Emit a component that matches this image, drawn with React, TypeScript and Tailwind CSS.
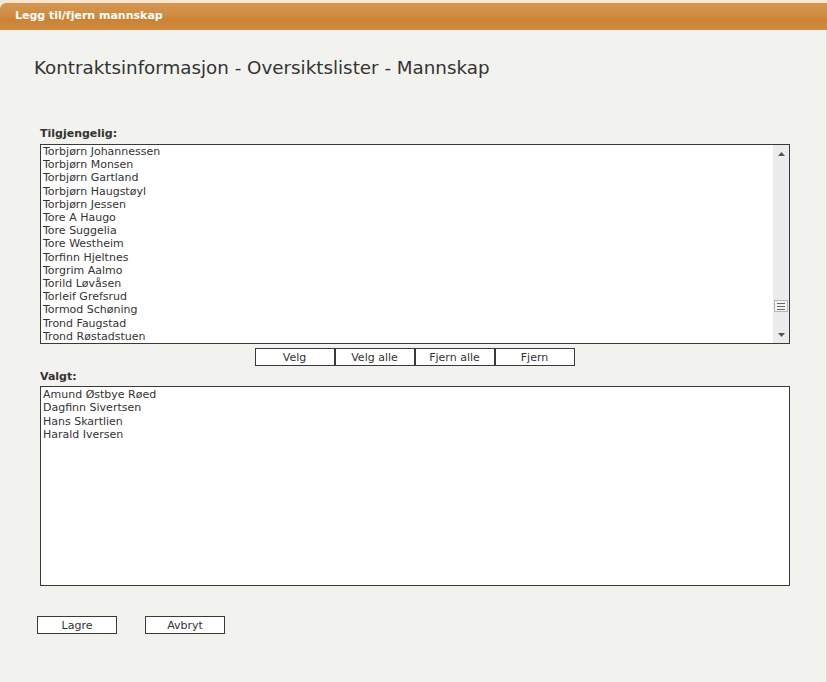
import React from "react";

const available = [
  "Torbjørn Johannessen",
  "Torbjørn Monsen",
  "Torbjørn Gartland",
  "Torbjørn Haugstøyl",
  "Torbjørn Jessen",
  "Tore A Haugo",
  "Tore Suggelia",
  "Tore Westheim",
  "Torfinn Hjeltnes",
  "Torgrim Aalmo",
  "Torild Løvåsen",
  "Torleif Grefsrud",
  "Tormod Schøning",
  "Trond Faugstad",
  "Trond Røstadstuen",
];

const selected = ["Amund Østbye Røed", "Dagfinn Sivertsen", "Hans Skartlien", "Harald Iversen"];

const font = "font-['Verdana','DejaVu_Sans',sans-serif]";

const Btn = ({ children, className = "" }: { children: React.ReactNode; className?: string }) => (
  <button
    className={`h-[18px] w-[80px] border border-[#3a3a3a] bg-white text-[11px] leading-none text-[#333] ${className}`}
  >
    {children}
  </button>
);

const Scrollbar = () => (
  <div className="flex w-[16px] flex-col items-center bg-[#ececec]">
    <div className="flex h-[17px] items-center justify-center">
      <svg width="7" height="4" viewBox="0 0 7 4">
        <path d="M3.5 0 L7 4 L0 4 Z" fill="#555" />
      </svg>
    </div>
    <div className="flex-1" />
    <div className="mb-[14px] flex h-[12px] w-[14px] flex-col items-center justify-center gap-[2px] border border-[#b5b5b5] bg-[#f4f4f4]">
      <div className="h-px w-[8px] bg-[#666]" />
      <div className="h-px w-[8px] bg-[#666]" />
      <div className="h-px w-[8px] bg-[#666]" />
    </div>
    <div className="flex h-[17px] items-center justify-center">
      <svg width="7" height="4" viewBox="0 0 7 4">
        <path d="M0 0 L7 0 L3.5 4 Z" fill="#555" />
      </svg>
    </div>
  </div>
);

export default function App() {
  return (
    <div className={`${font} flex h-[682px] w-[827px] flex-col bg-[#f2f2ee] text-[#333]`}>
      <div className="h-[3px] bg-[#f9e6d2]" />
      <div className="flex h-[27px] items-center rounded-tl-[6px] bg-[linear-gradient(#d49650,#cf8c42_45%,#cb8332_60%,#d08c44)] pl-[15px] text-[11px] font-bold text-white">
        Legg til/fjern mannskap
      </div>
      <div className="flex flex-1 flex-col border-r border-[#d8d8d2] pl-[34px] pr-[36px]">
        <h1 className="mt-[26px] text-[18.3px] leading-[24px] text-[#333]">
          Kontraktsinformasjon - Oversiktslister - Mannskap
        </h1>
        <div className="mt-[47px] pl-[6px]">
          <div className="text-[11px] font-bold leading-[13px]">Tilgjengelig:</div>
          <div className="mt-[4px] flex h-[200px] border border-[#3a3a3a] bg-white">
            <ul className="flex-1 pl-[2px] text-[11px] leading-[13.2px]">
              {available.map((n) => (
                <li key={n}>{n}</li>
              ))}
            </ul>
            <Scrollbar />
          </div>
          <div className="mt-[4px] flex justify-center pr-[1px]">
            <Btn>Velg</Btn>
            <Btn>Velg alle</Btn>
            <Btn>Fjern alle</Btn>
            <Btn>Fjern</Btn>
          </div>
          <div className="mt-[4px] text-[11px] font-bold leading-[13px]">Valgt:</div>
          <div className="mt-[3px] h-[200px] border border-[#3a3a3a] bg-white">
            <ul className="pl-[2px] pt-[1px] text-[11px] leading-[13.3px]">
              {selected.map((n) => (
                <li key={n}>{n}</li>
              ))}
            </ul>
          </div>
        </div>
        <div className="mt-[30px] flex gap-[28px] pl-[3px]">
          <Btn>Lagre</Btn>
          <Btn>Avbryt</Btn>
        </div>
      </div>
    </div>
  );
}
